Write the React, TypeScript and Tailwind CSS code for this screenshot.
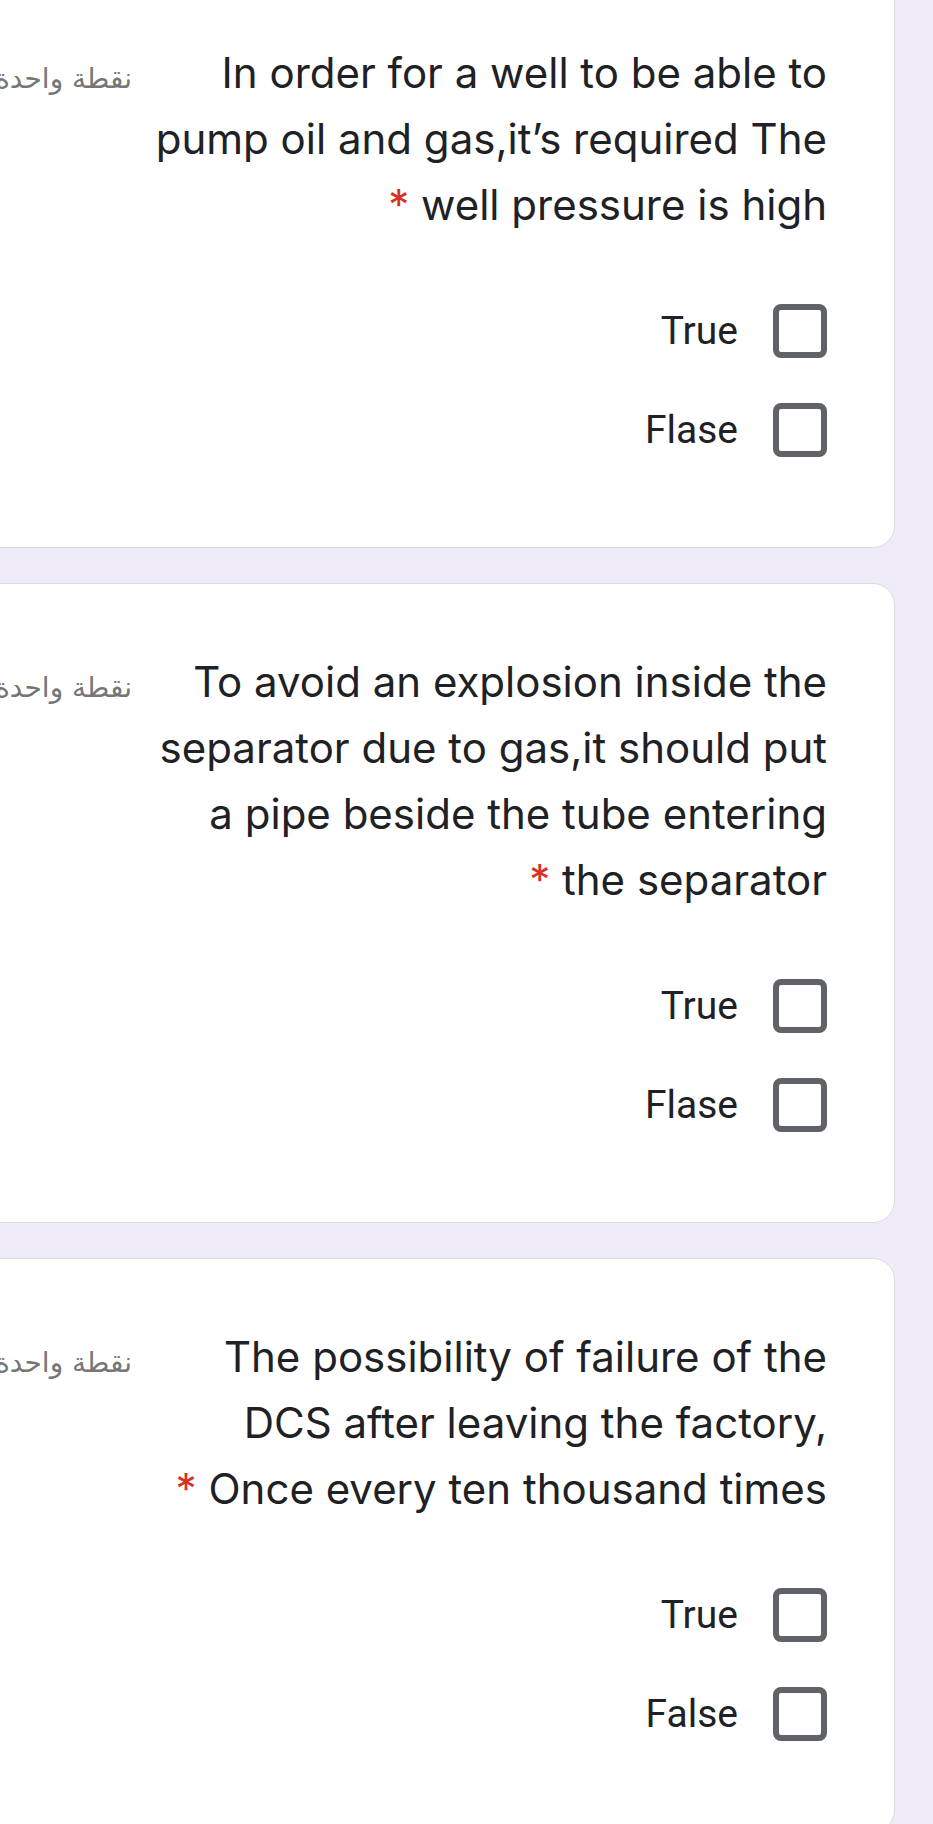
import React from "react";

interface Question {
  id: number;
  lines: string[];
  options: string[];
}

const questions: Question[] = [
  {
    id: 1,
    lines: [
      "In order for a well to be able to",
      "pump oil and gas,it\u2019s required The",
      "well pressure is high",
    ],
    options: ["True", "Flase"],
  },
  {
    id: 2,
    lines: [
      "To avoid an explosion inside the",
      "separator due to gas,it should put",
      "a pipe beside the tube entering",
      "the separator",
    ],
    options: ["True", "Flase"],
  },
  {
    id: 3,
    lines: [
      "The possibility of failure of the",
      "DCS after leaving the factory,",
      "Once every ten thousand times",
    ],
    options: ["True", "False"],
  },
];

function QuestionCard({ q }: { q: Question }) {
  return (
    <div className="-ml-[30px] bg-white rounded-[22px] border border-[#dadce0] pr-[67px] pt-[65px] pb-[90px]">
      <div className="flex items-baseline">
        {/* نقاط السؤال */}
        <div
          dir="rtl"
          className="w-[161px] shrink-0 whitespace-nowrap text-right text-[28px] text-[#767676] font-['DejaVu_Sans',sans-serif]"
        >
          نقطة واحدة
        </div>
        <div className="flex-1 text-right text-[42px] leading-[66px] text-[#202124] whitespace-nowrap font-['Inter',sans-serif]">
          {q.lines.map((line, i) => (
            <div key={i}>
              {i === q.lines.length - 1 && (
                <span className="text-[#d93025]">* </span>
              )}
              {line}
            </div>
          ))}
        </div>
      </div>

      <div className="mt-[66px] flex flex-col items-end gap-[45px]">
        {q.options.map((opt) => (
          <label key={opt} className="flex items-center gap-[35px]">
            <span className="text-[39px] leading-none text-[#202124]">{opt}</span>
            <span className="w-[54px] h-[54px] rounded-[8px] border-[6px] border-[#5f6368] bg-white" />
          </label>
        ))}
      </div>
    </div>
  );
}

export default function App() {
  return (
    <div className="min-h-screen bg-[#efebf8] overflow-hidden pr-[38px] font-['Roboto',sans-serif]">
      <div className="-mt-[26px] flex flex-col gap-[35px]">
        {questions.map((q) => (
          <QuestionCard key={q.id} q={q} />
        ))}
      </div>
    </div>
  );
}
